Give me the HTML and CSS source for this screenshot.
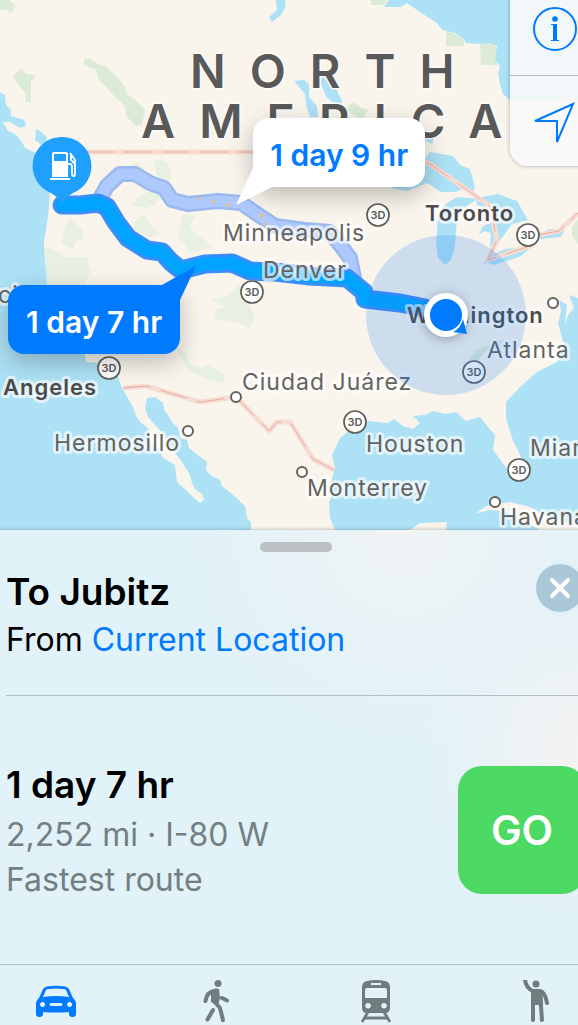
FILE: index.html
```
<!DOCTYPE html>
<html lang="en">
	<head>
		<meta charset="UTF-8">
		<meta name="viewport" content="width=device-width, initial-scale=1">
		<title>Directions to Jubitz</title>
		<link rel="stylesheet" href="styles.css">
	</head>
	<body>
		<main class="app">
			<section class="map" aria-label="Map">
				<svg class="map-canvas" viewBox="0 0 578 530">
					<defs>
						<g id="badge3d">
							<circle r="11" fill="#fff" stroke="#5e5e5a" stroke-width="1.7"/>
							<text class="badge-text" y="4" text-anchor="middle">3D</text>
						</g>
						<circle id="city" r="5" fill="#fff" stroke="#63625e" stroke-width="2"/>
						<filter id="shadow" x="-50%" y="-50%" width="200%" height="200%">
							<feDropShadow dx="0" dy="2" stdDeviation="6" flood-color="#000" flood-opacity=".3"/>
						</filter>
					</defs>
					<rect width="578" height="530" fill="#f9f5ed"/>
					<!-- parks and forests -->
					<g fill="#dcebd5">
						<path d="M0 0H9L16 6L11 13L6 9L0 11Z"/>
						<path d="M84 60L90 58L98 64L105 66L114 74L124 85L127 94L136 100L145 110L142 125L136 126L126 116L125 106L116 98L98 78L96 70L84 65Z"/>
						<path d="M13 76L22 68L26 74L36 75L31 82L31 102L26 102L25 92L19 86Z"/>
						<path d="M371 0H387L384 5H371Z"/>
						<path d="M446 31L463 37L464 46H446Z"/>
						<path d="M480 43H494L497 50V65H481Z"/>
						<path d="M346 108L353 102L361 108L368 110L362 120L350 113Z"/>
						<path d="M572 226L578 220V244L572 236Z"/>
						<path d="M469 359L478 349L490 345L504 339L500 347L484 352L478 361Z"/>
					</g>
					<g fill="#e8f0e1">
						<path d="M46 246L56 251L66 257H88L90 272L84 285H47L45 264Z"/>
						<path d="M154 162L158 159L168 163L172 178L167 182L157 175Z"/>
						<path d="M132 166L137 162L145 168L138 174Z"/>
						<path d="M131 205L140 196L152 190L161 197L155 205L146 208Z"/>
						<path d="M61 242L65 226L70 217L75 224L83 230V239L76 242L73 249L62 245Z"/>
						<path d="M134 222L144 215L151 225L160 234L150 238L134 230Z"/>
						<path d="M182 214L196 216L190 226L196 235L205 240L212 248L190 253L184 242L178 240Z"/>
						<path d="M212 299L225 297L240 285L244 297L255 315L250 329L238 322L214 319L216 310L225 307Z"/>
						<path d="M176 347L186 353L188 363L202 368L208 364L224 374V384L206 379L188 370Z"/>
					</g>
					<!-- oceans, gulfs and lakes -->
					<g class="water">
						<path d="M0 92L5 95L6 105L11 110V116L24 120L26 126L20 128L10 122L3 122L8 131L15 134L22 142L25 148L36 153L44 160L51 172L50 190L49 208L46 230L44 242L45 262L47 285L66 330L80 340L85 355L86 362L102 363L112 364L118 377L122 388L129 400L133 407L136 416L140 422L148 428L151 445L158 448L163 458L175 465L177 482L188 492L194 498L200 503L204 500L202 494L195 489L192 483L190 475L182 462L173 450L167 438L158 428L148 417L145 408L147 398L155 397L163 403L164 410L168 415L172 422L178 428L180 438L187 440L189 448L195 453L207 462L206 470L212 476L220 480L222 486L233 495L245 506L247 518L251 522V530H0Z"/>
						<path d="M36 129L40 131L47 137L44 147L35 140Z"/>
						<path d="M384 7L389 0H578V100H510L503 94L500 84L498 74L500 66L495 60L497 46L490 43L478 44L466 43L463 38L455 33L442 30L437 23L426 16L420 12L407 3L401 7Z"/>
						<path d="M276 0H285L286 6L281 15L272 22L269 17L277 10Z"/>
						<path d="M294 81L304 80L309 84L309 97L317 106L318 117H310L306 105L305 94Z"/>
						<path d="M318 78L323 68L327 78L334 84L342 101L340 107L327 98Z"/>
						<path d="M424 160L430 152L453 156L460 165L470 169L475 187L472 193L464 188L456 192L441 192L427 183L407 191L390 188L411 179Z"/>
						<path d="M424 140L430 132L434 138L432 144Z"/>
						<path d="M446 204L457 197L478 199L466 206L457 218L455 246L451 260L445 265L438 258L436 243L438 217Z"/>
						<path d="M476 198L498 194L517 201L528 220L512 224L504 235L497 244L490 247L491 233L484 231L479 235L482 227L491 222V210L477 205Z"/>
						<path d="M485 262L494 254L505 249L531 247L521 256L507 261L493 265Z"/>
						<path d="M538 235L549 229L565 229L561 237L540 239Z"/>
						<path d="M335 530L330 518L329 502L333 492L331 482L335 468L332 455L340 438L353 428L368 421L388 423L394 419L403 426L413 429L420 423L413 416L425 415L433 411L445 414L456 412L466 421L480 417L488 427L495 435L493 450L502 462L510 472L520 479L525 465L520 455L512 438L506 418V402L520 387L537 372L557 362L564 345L558 323L561 311L559 300L567 305L565 324L568 315L574 308L569 295L578 298V530Z"/>
					</g>
					<path d="M475 514L486 506L510 502L530 507L548 517L578 526V530H540L504 511L489 510Z" fill="#f9f5ed"/>
					<path d="M410 530L420 523L447 522L446 530Z" fill="#f9f5ed"/>
					<!-- borders -->
					<path class="border" d="M86 152H400L430 164L490 206L497 240L488 260L533 245M538 235L559 231L578 213M123 388L146 386L200 402L236 397L269 431L277 422H290L313 459L334 470"/>
					<path class="border-line" d="M86 152H400L430 164L490 206L497 240L488 260L533 245M538 235L559 231L578 213M123 388L146 386L200 402L236 397L269 431L277 422H290L313 459L334 470"/>
					<text class="continent" x="190" y="88">NORTH</text>
					<text class="continent" x="141" y="138">AMERICA</text>
					<!-- alternate route, then the selected one -->
					<path class="route" d="M98 202L107 186L120 174L135 174L150 183L164 188L172 200L188 204L218 201L241 203L260 216L275 226L305 230L330 232L341 246L350 258L354 278" stroke="#9ab9ef" stroke-width="16"/>
					<path class="route" d="M98 202L107 186L120 174L135 174L150 183L164 188L172 200L188 204L218 201L241 203L260 216L275 226L305 230L330 232L341 246L350 258L354 278" stroke="#aec9fd" stroke-width="11"/>
					<path d="M198 197L199 200M212 199L214 204M226 206L230 204M260 218L263 213M264 223L267 226" fill="none" stroke="#f8b95b" stroke-width="1.5"/>
					<path class="route" d="M62 205L80 205L98 203L107 207L116 222L128 238L147 250L162 252L171 262L181 270L205 264L232 263L250 271L275 272L310 276L347 278L364 292L365 299L400 303L425 308" stroke="#398ef8" stroke-width="19"/>
					<path class="route" d="M62 205L80 205L98 203L107 207L116 222L128 238L147 250L162 252L171 262L181 270L205 264L232 263L250 271L275 272L310 276L347 278L364 292L365 299L400 303L425 308" stroke="#00a4ff" stroke-width="13"/>
					<g class="labels">
						<text x="223" y="241">Minneapolis</text>
						<text x="263" y="278">Denver</text>
						<text x="425" y="221" class="major">Toronto</text>
						<text x="407" y="323" class="major">Washington</text>
						<text x="487" y="358">Atlanta</text>
						<text x="-2" y="303">ci</text>
						<text x="3" y="395" class="major">Angeles</text>
						<text x="242" y="390">Ciudad Juárez</text>
						<text x="54" y="451">Hermosillo</text>
						<text x="366" y="452">Houston</text>
						<text x="307" y="496">Monterrey</text>
						<text x="530" y="456">Miami</text>
						<text x="500" y="525">Havana</text>
					</g>
					<use href="#badge3d" x="378" y="215"/>
					<use href="#badge3d" x="528" y="235"/>
					<use href="#badge3d" x="252" y="292"/>
					<use href="#badge3d" x="109" y="368"/>
					<use href="#badge3d" x="474" y="372"/>
					<use href="#badge3d" x="355" y="422"/>
					<use href="#badge3d" x="519" y="470"/>
					<use href="#city" x="553" y="303"/>
					<use href="#city" x="236" y="397"/>
					<use href="#city" x="188" y="431"/>
					<use href="#city" x="302" y="472"/>
					<use href="#city" x="495" y="502"/>
					<!-- current location -->
					<circle cx="446" cy="315" r="80" fill="#1c7df0" fill-opacity=".2"/>
					<circle cx="446" cy="315" r="22" fill="#fff" filter="url(#shadow)"/>
					<circle cx="446" cy="315" r="16" fill="#007aff"/>
					<path d="M453 332Q461 328 463 319L467 334Z" fill="#007aff"/>
					<!-- fuel pin -->
					<path d="M62 137a29 29 0 0 1 11 56Q65 197 62 205Q59 197 51 193A29 29 0 0 1 62 137Z" fill="#1f9ffe"/>
					<path d="M50 178H70V180H50ZM52 177V154Q52 152 54 152H66Q68 152 68 154V177Z" fill="#fff"/>
					<path d="M54 154H66V161H54Z" fill="#1f9ffe"/>
					<path d="M68 164H70Q72 164 72 167V174Q72 176 74 176Q75 176 75 174V160L70 153M71 155V160L75 164" fill="none" stroke="#fff" stroke-width="1.8"/>
				</svg>
				<button class="callout callout-alt" type="button">
					<svg class="tail" width="40" height="40" viewBox="0 0 40 40"><path d="M18 0L1 37L37 19L38 0Z" fill="#fff"/></svg>
					1 day 9 hr
				</button>
				<button class="callout callout-main" type="button">
					<svg class="tail" width="40" height="40" viewBox="0 0 40 40"><path d="M2 21L38 1L21 37L2 37Z" fill="#007aff"/></svg>
					1 day 7 hr
				</button>
				<div class="controls">
					<button type="button" aria-label="Map settings">
						<svg width="46" height="46" viewBox="0 0 46 46">
							<circle cx="23" cy="22" r="21" fill="none" stroke="#007aff" stroke-width="2"/>
							<circle cx="23" cy="12" r="2.8" fill="#007aff"/>
							<path d="M19 17H25V33H27V34H19V33H21V18H19Z" fill="#007aff"/>
						</svg>
					</button>
					<button type="button" aria-label="Tracking">
						<svg width="46" height="46" viewBox="0 0 46 46">
							<path d="M3 23L41 6L25 44V23Z" fill="none" stroke="#007aff" stroke-width="2"/>
						</svg>
					</button>
				</div>
			</section>
			<section class="sheet">
				<div class="grabber"></div>
				<header class="heading">
					<div>
						<h1>To Jubitz</h1>
						<p>From <a href="#">Current Location</a></p>
					</div>
					<button class="close" type="button" aria-label="Close">
						<svg width="48" height="48" viewBox="0 0 48 48">
							<path d="M16 16L32 32M32 16L16 32" stroke="#fff" stroke-width="4" stroke-linecap="round"/>
						</svg>
					</button>
				</header>
				<div class="trip">
					<div>
						<h2>1 day 7 hr</h2>
						<p>2,252 mi · I-80 W</p>
						<p>Fastest route</p>
					</div>
					<button class="go" type="button">GO</button>
				</div>
				<nav class="modes">
					<button class="active" type="button" aria-label="Drive">
						<svg width="44" height="44" viewBox="0 0 44 44">
							<path fill="currentColor" fill-rule="evenodd" d="M2 23Q2 20 5 18L9 9Q10 7 13 6.500Q22 5 31 6.500Q34 7 35 9L39 18Q42 20 42 23V34Q42 37 38.500 37Q35 37 35 34V32Q22 33 9 32V34Q9 37 5.500 37Q2 37 2 34ZM9 17Q22 15 35 17L32 10Q31 9 29 9Q22 8 15 9Q13 9 12 10ZM8.500 22a2.500 2.500 0 1 0 .1 0ZM35.500 22a2.500 2.500 0 1 0 .1 0ZM17 23a1.500 1.500 0 0 0 0 3H27a1.500 1.500 0 0 0 0-3Z"/>
						</svg>
					</button>
					<button type="button" aria-label="Walk">
						<svg width="44" height="44" viewBox="0 0 44 44">
							<circle cx="24" cy="3.500" r="3.500" fill="currentColor"/>
							<path d="M17 12Q20 7 25 9L26 18L24 26L17 22Z" fill="currentColor"/>
							<path d="M20 11Q13 12 11.500 21M28 18L33 20.500M20 21L26 28L29 40M19 30L13.500 39.500" fill="none" stroke="currentColor" stroke-width="4" stroke-linecap="round" stroke-linejoin="round"/>
						</svg>
					</button>
					<button type="button" aria-label="Transit">
						<svg width="44" height="44" viewBox="0 0 44 44">
							<path fill="currentColor" fill-rule="evenodd" d="M8 7Q8 2 13 1Q22 -1 31 1Q36 2 36 7V28Q36 33 31 33H13Q8 33 8 28ZM17 3V5H27V3ZM13 8Q11 8 11 10V18H33V10Q33 8 31 8ZM14 23a2.800 2.800 0 1 0 .1 0ZM30 23a2.800 2.800 0 1 0 .1 0Z"/>
							<path d="M14 32L8 42M30 32L36 42M11 38H33" fill="none" stroke="currentColor" stroke-width="2.800"/>
						</svg>
					</button>
					<button type="button" aria-label="Ride">
						<svg width="44" height="44" viewBox="0 0 44 44">
							<circle cx="22" cy="4" r="3.500" fill="currentColor"/>
							<path d="M11 0Q12 8 19 11H26Q31 12 33 23M19 12V40M26 12L28 40" fill="none" stroke="currentColor" stroke-width="4" stroke-linecap="round" stroke-linejoin="round"/>
							<path d="M17 10H28L29 25H17Z" fill="currentColor"/>
						</svg>
					</button>
				</nav>
			</section>
		</main>
	</body>
</html>
```
FILE: styles.css
```
* {
	box-sizing: border-box;
	margin: 0;
	padding: 0;
}
body {
	background-color: #e1f2f9;
	color: #000;
	font-family: Inter, "Liberation Sans", sans-serif;
}
button {
	border: none;
	background: none;
	color: inherit;
	font-family: inherit;
	cursor: pointer;
}
svg {
	display: block;
}
.app {
	overflow: hidden;
}
.map {
	position: relative;
}
.map-canvas {
	width: 100%;
}
.water {
	fill: #ade1f6;
}
.border, .border-line {
	fill: none;
	stroke: #f6ddd4;
	stroke-width: 5;
}
.border-line {
	stroke: #ecaaa0;
	stroke-width: 1;
	stroke-dasharray: 28 10;
}
.route {
	fill: none;
	stroke-linecap: round;
	stroke-linejoin: round;
}
.continent {
	font-size: 47px;
	font-weight: 600;
	letter-spacing: 24px;
	fill: #595959;
	stroke: #fdfbf7;
	stroke-width: 3px;
	paint-order: stroke;
}
.labels {
	font-size: 23px;
	letter-spacing: 1px;
	fill: #646360;
	stroke: rgba(255, 255, 255, 0.65);
	stroke-width: 6px;
	stroke-linejoin: round;
	paint-order: stroke;
}
.major {
	font-size: 22px;
	font-weight: 600;
	fill: #4d4b49;
}
.badge-text {
	font-size: 11px;
	font-weight: 600;
	fill: #5a5a57;
}
.callout {
	position: absolute;
	width: 172px;
	height: 69px;
	padding-top: 4px;
	border-radius: 16px;
	font-size: 30px;
	font-weight: 600;
	white-space: nowrap;
	box-shadow: 0 8px 24px rgba(0, 0, 0, 0.25);
}
.callout-alt {
	left: 43.8%;
	top: 22.3%;
	background-color: #fff;
	color: #007aff;
}
.callout-main {
	left: 1.4%;
	top: 53.8%;
	background-color: #007aff;
	color: #fff;
}
.tail {
	position: absolute;
}
.callout-alt .tail {
	left: -18px;
	bottom: -21px;
}
.callout-main .tail {
	right: -18px;
	top: -20px;
}
.controls {
	position: absolute;
	top: -16px;
	right: -22px;
	width: 90px;
	border-radius: 18px;
	background-color: rgba(247, 248, 248, 0.92);
	box-shadow: 0 0 4px rgba(0, 0, 0, 0.3);
}
.controls button {
	display: flex;
	align-items: center;
	justify-content: center;
	width: 100%;
	height: 91px;
}
.controls button + button {
	border-top: 1px solid #b8bfc2;
}
/* the sheet runs past both edges of the window */
.sheet {
	position: relative;
	margin: 0 -38px 0 -24px;
	padding-top: 12px;
	background: radial-gradient(circle at 67% 0, #eff3f4, rgba(239, 243, 244, 0) 220px), radial-gradient(circle at 96% 45%, #f6f3f2, rgba(246, 243, 242, 0) 170px), #e1f2f9;
	box-shadow: 0 0 4px rgba(0, 0, 0, 0.3);
}
.grabber {
	width: 72px;
	height: 10px;
	margin: 0 auto;
	border-radius: 5px;
	background-color: #bbc1c4;
}
.heading, .trip {
	display: flex;
	justify-content: space-between;
	border-bottom: 1px solid #aebfc7;
}
.heading {
	margin-left: 30px;
	padding: 12px 32px 35px 0;
}
h1, h2 {
	font-size: 37px;
	font-weight: 600;
	line-height: 56px;
}
h2 {
	line-height: 54px;
}
p {
	font-size: 32px;
	line-height: 45px;
	white-space: nowrap;
}
h1 + p {
	font-size: 32px;
	line-height: 40px;
}
a {
	color: #007aff;
	text-decoration: none;
}
.close {
	width: 48px;
	height: 48px;
	border-radius: 50%;
	background-color: #abc8d9;
}
.trip {
	align-items: center;
	padding: 62px 30px;
}
.trip p {
	color: #747f82;
}
.go {
	width: 128px;
	height: 128px;
	border-radius: 24px;
	background-color: #4cd964;
	color: #fff;
	font-size: 41px;
	font-weight: 600;
}
.modes {
	display: grid;
	grid-template-columns: repeat(4, 1fr);
}
.modes button {
	display: flex;
	justify-content: center;
	height: 60px;
	padding-top: 15px;
	color: #717c7e;
}
.modes .active {
	color: #007aff;
}
```
